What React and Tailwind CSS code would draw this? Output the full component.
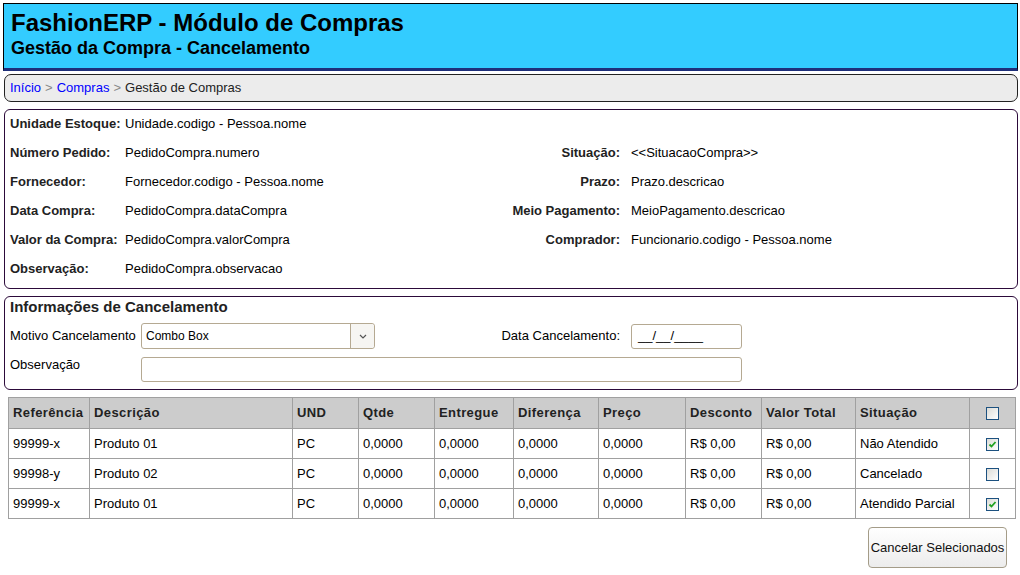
import React from "react";

const F = { fontFamily: '"Liberation Sans", Arial, sans-serif' };

function Check({ checked }) {
  return (
    <span className="inline-flex h-[13px] w-[13px] items-center justify-center border border-[#1c5180] bg-gradient-to-br from-[#dcdcd7] to-[#ffffff]">
      {checked && (
        <svg width="9" height="9" viewBox="0 0 9 9">
          <path d="M1.5 4.5 L3.5 6.5 L7.5 2" stroke="#21a121" strokeWidth="1.8" fill="none" />
        </svg>
      )}
    </span>
  );
}

const cols = [81, 203, 66, 76, 79, 85, 87, 76, 94, 114, 46];
const headers = ["Referência", "Descrição", "UND", "Qtde", "Entregue", "Diferença", "Preço", "Desconto", "Valor Total", "Situação", ""];
const rows = [
  ["99999-x", "Produto 01", "PC", "0,0000", "0,0000", "0,0000", "0,0000", "R$ 0,00", "R$ 0,00", "Não Atendido", true],
  ["99998-y", "Produto 02", "PC", "0,0000", "0,0000", "0,0000", "0,0000", "R$ 0,00", "R$ 0,00", "Cancelado", false],
  ["99999-x", "Produto 01", "PC", "0,0000", "0,0000", "0,0000", "0,0000", "R$ 0,00", "R$ 0,00", "Atendido Parcial", true],
];

export default function App() {
  const leftRows = [
    ["Unidade Estoque:", "Unidade.codigo - Pessoa.nome"],
    ["Número Pedido:", "PedidoCompra.numero"],
    ["Fornecedor:", "Fornecedor.codigo - Pessoa.nome"],
    ["Data Compra:", "PedidoCompra.dataCompra"],
    ["Valor da Compra:", "PedidoCompra.valorCompra"],
    ["Observação:", "PedidoCompra.observacao"],
  ];
  const rightRows = [
    null,
    ["Situação:", "<<SituacaoCompra>>"],
    ["Prazo:", "Prazo.descricao"],
    ["Meio Pagamento:", "MeioPagamento.descricao"],
    ["Comprador:", "Funcionario.codigo - Pessoa.nome"],
    null,
  ];
  return (
    <div style={F} className="w-[1020px] h-[575px] bg-white text-black relative overflow-hidden">
      {/* Header */}
      <div className="mx-[3px] mt-[3px] h-[68px] w-[1015px] border border-black border-b-[3px] border-b-[#1e2f7a] bg-[#33ccff] pl-[7px] pt-[5px]">
        <div className="text-[24px] font-bold leading-[28px]">FashionERP - Módulo de Compras</div>
        <div className="text-[18px] font-bold leading-[22px]">Gestão da Compra - Cancelamento</div>
      </div>

      {/* Breadcrumb */}
      <div className="ml-[4px] mt-[3px] h-[28px] w-[1014px] rounded-[7px] border border-[#222] bg-[#ececec] flex items-center pl-[5px] text-[13px]">
        <span className="text-[#0000ff]">Início</span>
        <span className="text-[#888] mx-[4px]">&gt;</span>
        <span className="text-[#0000ff]">Compras</span>
        <span className="text-[#888] mx-[4px]">&gt;</span>
        <span className="text-[#222]">Gestão de Compras</span>
      </div>

      {/* Info panel */}
      <div className="ml-[4px] mt-[7px] h-[180px] w-[1014px] rounded-[6px] border border-[#2c0a3a] pt-[2px] flex text-[13px]">
        <div className="w-[500px] flex flex-col">
          {leftRows.map(([l, v], i) => (
            <div key={i} className="h-[29px] flex items-start pt-[2px]">
              <span className="w-[120px] pl-[5px] font-bold text-[#222] shrink-0">{l}</span>
              <span>{v}</span>
            </div>
          ))}
        </div>
        <div className="flex flex-col">
          {rightRows.map((r, i) => (
            <div key={i} className="h-[29px] flex items-start pt-[2px]">
              {r && (
                <>
                  <span className="w-[115px] text-right font-bold text-[#222] shrink-0">{r[0]}</span>
                  <span className="ml-[11px]">{r[1]}</span>
                </>
              )}
            </div>
          ))}
        </div>
      </div>

      {/* Cancel panel */}
      <div className="ml-[4px] mt-[7px] h-[94px] w-[1014px] rounded-[6px] border border-[#2c0a3a] text-[13px]">
        <div className="pl-[5px] pt-[1px] text-[15px] font-bold leading-[18px] text-[#222]">Informações de Cancelamento</div>
        <div className="mt-[7px] flex items-center h-[26px]">
          <span className="w-[136px] pl-[5px] shrink-0">Motivo Cancelamento</span>
          <div className="flex h-[26px] w-[234px] rounded-[3px] border border-[#b5a992] bg-white">
            <div className="flex-1 flex items-center pl-[4px] text-[12px]">Combo Box</div>
            <div className="w-[24px] border-l border-[#b5a992] bg-[#f6f5f2] flex items-center justify-center rounded-r-[3px]">
              <svg width="8" height="5" viewBox="0 0 8 5"><path d="M1 1 L4 4 L7 1" stroke="#555" strokeWidth="1.2" fill="none" /></svg>
            </div>
          </div>
          <span className="w-[245px] text-right shrink-0">Data Cancelamento:</span>
          <div className="ml-[11px] h-[25px] w-[111px] rounded-[3px] border border-[#b5a992] flex items-center pl-[6px]">__/__/____</div>
        </div>
        <div className="mt-[8px] flex items-start">
          <span className="w-[136px] pl-[5px] shrink-0 -mt-[2px]">Observação</span>
          <div className="h-[25px] w-[601px] rounded-[3px] border border-[#b5a992]" />
        </div>
      </div>

      {/* Table */}
      <table className="ml-[8px] mt-[7px] border-collapse text-[13px]">
        <thead>
          <tr className="h-[31px] bg-[#cccccc]">
            {headers.map((h, i) => (
              <th key={i} style={{ width: cols[i] }} className={`border border-[#a0a0a0] font-bold text-[#222] tracking-[0.4px] ${i === 10 ? "text-center" : "text-left pl-[4px]"}`}>
                {i === 10 ? <span className="inline-flex align-middle"><Check checked={false} /></span> : h}
              </th>
            ))}
          </tr>
        </thead>
        <tbody>
          {rows.map((r, ri) => (
            <tr key={ri} className="h-[30px]">
              {r.map((c, ci) => (
                <td key={ci} className={`border border-[#a0a0a0] ${ci === 10 ? "text-center" : "pl-[4px]"}`}>
                  {ci === 10 ? <span className="inline-flex align-middle"><Check checked={c} /></span> : c}
                </td>
              ))}
            </tr>
          ))}
        </tbody>
      </table>

      {/* Button */}
      <div className="flex justify-end pr-[13px] mt-[8px]">
        <button className="h-[41px] w-[139px] rounded-[4px] border border-[#a49c88] bg-gradient-to-b from-white to-[#ececec] text-[13px] text-[#111]">
          Cancelar Selecionados
        </button>
      </div>
    </div>
  );
}
